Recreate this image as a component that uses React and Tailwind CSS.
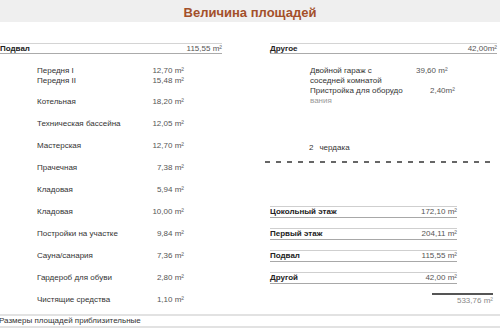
import React from "react";

const leftRows = [
  ["Котельная", "18,20 m²"],
  ["Техническая бассейна", "12,05 m²"],
  ["Мастерская", "12,70 m²"],
  ["Прачечная", "7,38 m²"],
  ["Кладовая", "5,94 m²"],
  ["Кладовая", "10,00 m²"],
  ["Постройки на участке", "9,84 m²"],
  ["Сауна/санария", "7,36 m²"],
  ["Гардероб для обуви", "2,80 m²"],
  ["Чистящие средства", "1,10 m²"],
];

const summary = [
  ["Цокольный этаж", "172,10 m²"],
  ["Первый этаж", "204,11 m²"],
  ["Подвал", "115,55 m²"],
  ["Другой", "42,00 m²"],
];

export default function App() {
  return (
    <div className="w-[500px] h-[330px] overflow-hidden bg-white font-['Liberation_Sans',Arial,sans-serif] text-[8px] text-[#333]">
      {/* header */}
      <div className="h-[22px] bg-[#efefef] flex items-center justify-center pt-[2px]">
        <h1 className="text-[13px] font-bold text-[#a3502a] leading-none">Величина площадей</h1>
      </div>

      <div className="flex">
        {/* LEFT */}
        <div className="w-[222px] mt-[21px]">
          <div className="h-[11px] border-t border-b border-t-[#d4d4d4] border-b-[#ababab] flex items-center justify-between leading-[9px]">
            <span className="font-bold text-[#222]">Подвал</span>
            <span className="text-[#555]">115,55 m²</span>
          </div>

          <div className="w-[184px] pl-[37px] mt-[12px] leading-[10px]">
            <div className="flex justify-between">
              <span>Передня I</span>
              <span className="text-[#555]">12,70 m²</span>
            </div>
            <div className="flex justify-between">
              <span>Передня II</span>
              <span className="text-[#555]">15,48 m²</span>
            </div>
            <div className="mt-[5px]">
              {leftRows.map(([label, val], i) => (
                <div key={i} className="h-[22px] flex items-center justify-between">
                  <span>{label}</span>
                  <span className="text-[#555]">{val}</span>
                </div>
              ))}
            </div>
          </div>
        </div>

        {/* RIGHT */}
        <div className="ml-[48px] w-[227px] mt-[21px]">
          <div className="h-[11px] border-t border-b border-t-[#d4d4d4] border-b-[#ababab] flex items-center justify-between leading-[9px]">
            <span className="font-bold text-[#222]">Другое</span>
            <span className="text-[#555]">42,00m²</span>
          </div>

          <div className="pl-[40px] mt-[12px] leading-[10px] grid grid-cols-[106px_1fr]">
            <span>Двойной гараж с</span>
            <span className="text-[#555]">39,60 m²</span>
            <span>соседней комнатой</span>
            <span></span>
            <span>Пристройка для оборудо</span>
            <span className="text-[#555] pl-[14px]">2,40m²</span>
            <span className="text-[#999]">вания</span>
            <span></span>
          </div>

          <div className="pl-[39px] mt-[37px] leading-[10px]">
            <span>2</span>
            <span className="ml-[6px]">чердака</span>
          </div>

          <div className="-ml-[5px] w-[228px] h-[2px] mt-[8px] bg-[repeating-linear-gradient(90deg,#666_0_5px,transparent_5px_11px)]" />

          <div className="w-[187px] mt-[43px]">
            {summary.map(([label, val], i) => (
              <div
                key={i}
                className={`h-[12px] border-t border-b border-t-[#cfcfcf] border-b-[#a8a8a8] flex items-center justify-between leading-[10px] ${i > 0 ? "mt-[10px]" : ""}`}
              >
                <span className="font-bold text-[#222]">{label}</span>
                <span className="text-[#555]">{val}</span>
              </div>
            ))}
          </div>

          <div className="w-[223px] mt-[9px] flex flex-col items-end">
            <div className="w-[61px] h-[2px] bg-[#555]" />
            <span className="mt-[1px] leading-[9px] text-[#888]">533,76 m²</span>
          </div>
        </div>
      </div>

      {/* footer */}
      <div className="mt-[3px] border-t-2 border-b-2 border-[#e2e2e2] leading-[10px]">
        <span className="-ml-[1px]">Размеры площадей приблизительные</span>
      </div>
    </div>
  );
}
